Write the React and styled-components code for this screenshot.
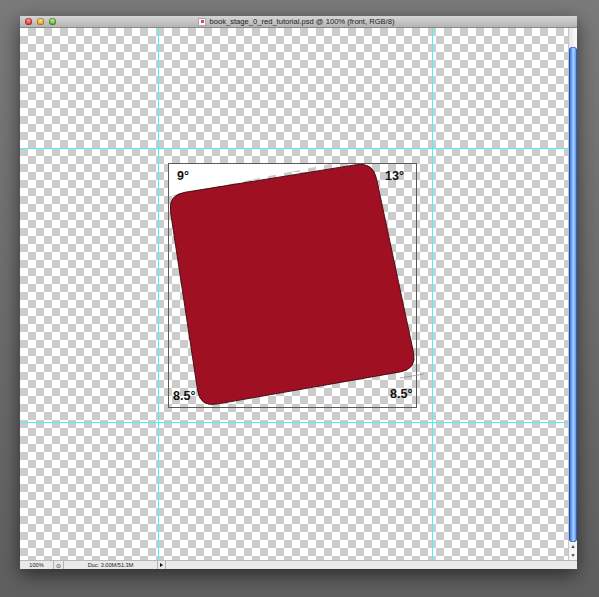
import React from 'react';
import styled, { createGlobalStyle } from 'styled-components';

const GlobalStyle = createGlobalStyle`
  html, body {
    margin: 0;
    padding: 0;
    background: #6f6f6f;
  }
  body {
    font-family: "Liberation Sans", Arial, sans-serif;
  }
`;

const Desk = styled.div`
  width: 599px;
  height: 597px;
  box-sizing: border-box;
  padding: 16px 22px 28px 20px;
  background: linear-gradient(#7a7a7a, #6a6a6a 60%, #5f5f5f);
  display: flex;
`;

const Window = styled.div`
  flex: 1;
  display: flex;
  flex-direction: column;
  background: #ececec;
  box-shadow: 0 6px 18px rgba(0, 0, 0, 0.55);
`;

const TitleBar = styled.div`
  height: 12px;
  display: flex;
  align-items: center;
  padding-left: 5px;
  background: linear-gradient(#d6d6d6, #b4b4b4);
  border-bottom: 1px solid #8a8a8a;
  box-sizing: border-box;
`;

const Lights = styled.div`
  display: flex;
  gap: 5px;
`;

const Light = styled.span`
  width: 7px;
  height: 7px;
  border-radius: 50%;
  background: radial-gradient(circle at 50% 35%, ${p => p.$hi}, ${p => p.$base} 70%);
  box-shadow: inset 0 0 0 0.5px rgba(0, 0, 0, 0.4);
`;

const Title = styled.div`
  flex: 1;
  display: flex;
  justify-content: center;
  align-items: center;
  gap: 3px;
  font-size: 7.6px;
  color: #222;
  padding-right: 40px;
`;

const DocIcon = styled.span`
  width: 6px;
  height: 6px;
  background: #fff;
  border: 0.5px solid #aaa;
  display: flex;
  align-items: center;
  justify-content: center;
  &::after {
    content: '';
    width: 3px;
    height: 3px;
    background: #d9485c;
  }
`;

const Middle = styled.div`
  height: 532px;
  display: flex;
`;

const Canvas = styled.div`
  width: 548px;
  height: 532px;
  position: relative;
  background-color: #fff;
  background-image:
    linear-gradient(45deg, #cccccc 25%, transparent 25%, transparent 75%, #cccccc 75%),
    linear-gradient(45deg, #cccccc 25%, transparent 25%, transparent 75%, #cccccc 75%);
  background-size: 16px 16px;
  background-position: 0 0, 8px 8px;
  overflow: hidden;
`;

const Art = styled.svg`
  position: absolute;
  left: 0;
  top: 0;
`;

const Scrollbar = styled.div`
  width: 9px;
  display: flex;
  flex-direction: column;
  background: #f4f4f4;
  border-left: 1px solid #c4c4c4;
  box-sizing: border-box;
`;

const TrackTop = styled.div`
  height: 19px;
  background: linear-gradient(90deg, #e4e4e4, #fafafa);
`;

const Thumb = styled.div`
  flex: 1;
  border-radius: 4px;
  background: linear-gradient(90deg, #1f5fcf, #7db4ff 40%, #a9d0ff 55%, #3b7ee8);
  box-shadow: inset 0 0 0 0.6px #17489e;
`;

const Arrows = styled.div`
  height: 18px;
  display: flex;
  flex-direction: column;
  align-items: center;
  justify-content: space-around;
  font-size: 5px;
  color: #333;
  line-height: 1;
`;

const StatusBar = styled.div`
  height: 8px;
  display: flex;
  align-items: center;
  font-size: 5.6px;
  color: #222;
  background: #e9e9e9;
  border-top: 1px solid #b8b8b8;
`;

const Zoom = styled.div`
  width: 33px;
  height: 100%;
  border-right: 1px solid #b5b5b5;
  display: flex;
  align-items: center;
  justify-content: center;
`;

const StatusIcon = styled.div`
  width: 9px;
  height: 100%;
  border-right: 1px solid #b5b5b5;
  display: flex;
  align-items: center;
  justify-content: center;
  font-size: 6px;
`;

const DocInfo = styled.div`
  width: 93px;
  text-align: center;
`;

const Popup = styled.div`
  width: 7px;
  height: 100%;
  border-left: 1px solid #b5b5b5;
  border-right: 1px solid #b5b5b5;
  display: flex;
  align-items: center;
  justify-content: center;
  &::after {
    content: '';
    border-left: 3px solid #111;
    border-top: 2.5px solid transparent;
    border-bottom: 2.5px solid transparent;
  }
`;

const Filler = styled.div`
  flex: 1;
`;

function roundedPath(pts, r) {
  const n = pts.length;
  let d = '';
  for (let i = 0; i < n; i++) {
    const p = pts[i];
    const prev = pts[(i - 1 + n) % n];
    const next = pts[(i + 1) % n];
    const toPrev = [prev[0] - p[0], prev[1] - p[1]];
    const toNext = [next[0] - p[0], next[1] - p[1]];
    const lp = Math.hypot(...toPrev);
    const ln = Math.hypot(...toNext);
    const a = [p[0] + (toPrev[0] / lp) * r, p[1] + (toPrev[1] / lp) * r];
    const b = [p[0] + (toNext[0] / ln) * r, p[1] + (toNext[1] / ln) * r];
    d += `${i === 0 ? 'M' : 'L'}${a[0].toFixed(1)},${a[1].toFixed(1)} Q${p[0]},${p[1]} ${b[0].toFixed(1)},${b[1].toFixed(1)} `;
  }
  return d + 'Z';
}

// page coordinates of the card corners (before rounding)
const card = [
  [168, 195],
  [373, 162],
  [417, 369],
  [200, 407],
];

const labelStyle = {
  fontFamily: '"Liberation Sans", Arial, sans-serif',
  fontWeight: 700,
  fontSize: 12.5,
  fill: '#111',
};

const GUIDE = '#4ff2f2';

export default function App() {
  return (
    <>
      <GlobalStyle />
      <Desk>
        <Window>
          <TitleBar>
            <Lights>
              <Light $hi="#ff9b8f" $base="#d8302a" />
              <Light $hi="#ffe08a" $base="#e09a1a" />
              <Light $hi="#b9f08a" $base="#4fa52a" />
            </Lights>
            <Title>
              <DocIcon />
              book_stage_0_red_tutorial.psd @ 100% (front, RGB/8)
            </Title>
          </TitleBar>
          <Middle>
            <Canvas>
              <Art width="548" height="532" viewBox="20 28 548 532">
                <polygon points="169,164 330,164 169,196" fill="#ffffff" />
                <rect x="158" y="28" width="1" height="532" fill={GUIDE} />
                <rect x="432" y="28" width="1" height="532" fill={GUIDE} />
                <rect x="20" y="148" width="548" height="1" fill={GUIDE} />
                <rect x="20" y="422" width="548" height="1" fill={GUIDE} />
                <rect x="168.5" y="163.5" width="248" height="244" fill="none" stroke="#5a5a5a" strokeWidth="1" shapeRendering="crispEdges" />
                <line x1="400" y1="378" x2="424" y2="374" stroke="#888" strokeWidth="0.7" />
                <path d={roundedPath(card, 17)} fill="#9e1022" stroke="#3b0a10" strokeWidth="0.9" />
                <text x="177" y="180" style={labelStyle}>9°</text>
                <text x="385" y="180" style={labelStyle}>13°</text>
                <text x="173" y="400" style={labelStyle}>8.5°</text>
                <text x="390" y="398" style={labelStyle}>8.5°</text>
              </Art>
            </Canvas>
            <Scrollbar>
              <TrackTop />
              <Thumb />
              <Arrows>
                <span>▲</span>
                <span>▼</span>
              </Arrows>
            </Scrollbar>
          </Middle>
          <StatusBar>
            <Zoom>100%</Zoom>
            <StatusIcon>⊙</StatusIcon>
            <DocInfo>Doc: 3.00M/51.3M</DocInfo>
            <Popup />
            <Filler />
          </StatusBar>
        </Window>
      </Desk>
    </>
  );
}
